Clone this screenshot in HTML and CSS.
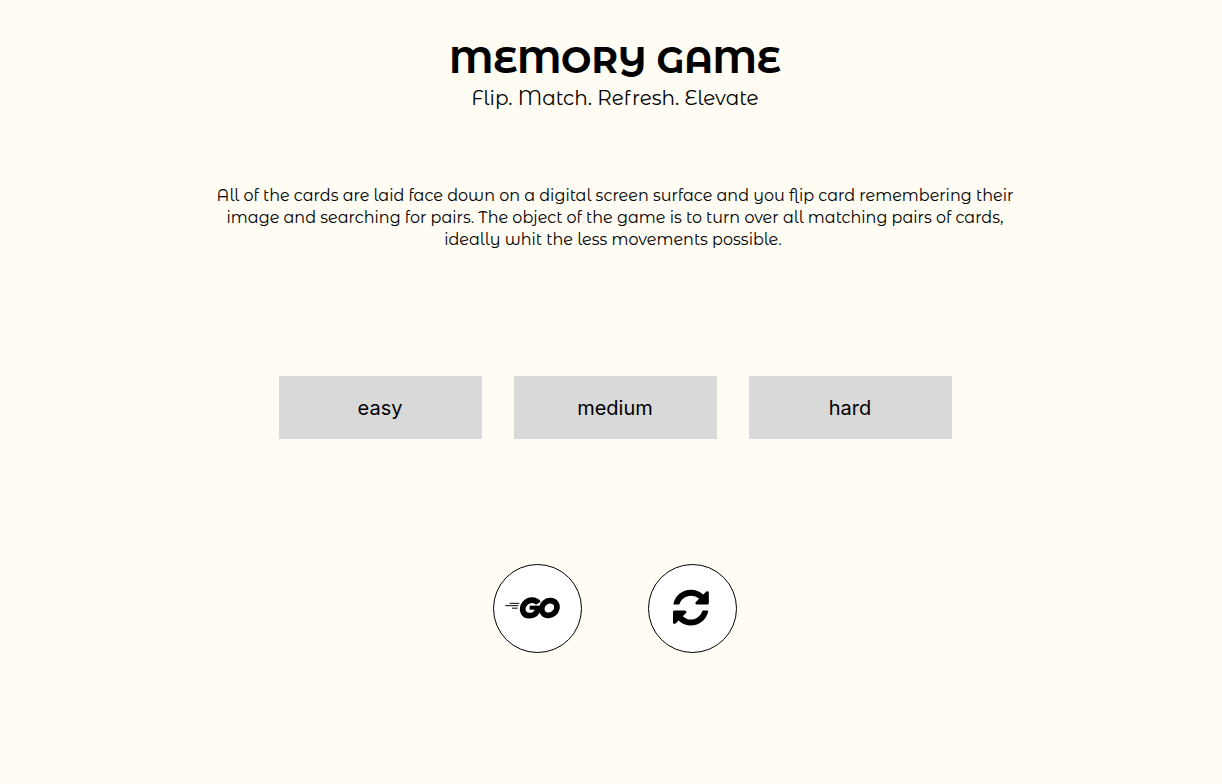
FILE: index.html
```html
<!DOCTYPE html>
<html lang="en">
<head>
<meta charset="utf-8">
<meta name="viewport" content="width=device-width, initial-scale=1">
<title>Memory Game</title>
<link rel="stylesheet" href="styles.css">
</head>
<body>
<main class="page">
  <header class="header">
    <h1 class="title">MEMORY GAME</h1>
    <p class="tagline">Flip. Match. Refresh. Elevate</p>
  </header>
  <p class="intro">All of the cards are laid face down on a digital screen surface and you flip card remembering their<br>image and searching for pairs. The object of the game is to turn over all matching pairs of cards,<br>ideally whit the less movements possible.&nbsp;</p>
  <div class="levels">
    <button class="level" type="button">easy</button>
    <button class="level" type="button">medium</button>
    <button class="level" type="button">hard</button>
  </div>
  <div class="actions">
    <button class="action" type="button" aria-label="Go">
      <svg class="art" viewBox="26 29 261 261" aria-hidden="true">
        <g fill="none" stroke="#000">
          <path d="M60 151H99" stroke-width="3"/>
          <path d="M73 144H102M80 158.500H97" stroke-width="3"/>
          <path d="M159 144C151 131 129 131 118 145C106 161 113 181 132 181C147 181 156 173 158 158" stroke-width="17"/>
          <path d="M133 157H164" stroke-width="12"/>
          <ellipse cx="192" cy="158" rx="24" ry="21" stroke-width="17" transform="rotate(-38 192 158)"/>
        </g>
      </svg>
    </button>
    <button class="action" type="button" aria-label="Refresh">
      <svg class="art" viewBox="26 29 261 261" aria-hidden="true">
        <path transform="translate(98 103) scale(.07)" d="M1511 928q0 5-1 7-64 268-268 434.500t-478 166.500q-146 0-282.500-55t-243.500-157l-129 129q-19 19-45 19t-45-19-19-45v-448q0-26 19-45t45-19h448q26 0 45 19t19 45-19 45l-137 137q71 66 161 102t187 36q134 0 250-65t186-179q11-17 53-117 8-23 30-23h192q13 0 22.500 9.500t9.500 22.500zm25-800v448q0 26-19 45t-45 19h-448q-26 0-45-19t-19-45 19-45l138-138q-148-137-349-137-134 0-250 65t-186 179q-11 17-53 117-8 23-30 23h-199q-13 0-22.500-9.500t-9.500-22.500v-7q65-268 270-434.500t480-166.500q146 0 284 55.500t245 156.500l130-129q19-19 45-19t45 19 19 45z"/>
      </svg>
    </button>
  </div>
</main>
</body>
</html>
```
FILE: styles.css
```css
* { box-sizing: border-box; }

body {
  margin: 0;
  background: #fffcf4;
  color: #000;
  font-family: "Montserrat Alternates", Inter, sans-serif;
}

.page {
  display: flex;
  flex-direction: column;
  align-items: center;
  padding: 36px 0 48px 8px;
  text-align: center;
}

.title {
  margin: 0;
  font-size: 36px;
  font-weight: 700;
  line-height: 48px;
}

.tagline {
  margin: 0;
  font-size: 20px;
  line-height: 28px;
}

.intro {
  margin: 73px 0 0;
  font-size: 16px;
  line-height: 22px;
}

.levels {
  display: flex;
  flex-wrap: wrap;
  justify-content: center;
  gap: 32px;
  margin-top: 125px;
}

.level {
  width: 203px;
  height: 63px;
  border: 0;
  padding: 0;
  background: #d9d9d9;
  color: #000;
  font: 20px/24px Inter, sans-serif;
}

.actions {
  display: flex;
  gap: 66px;
  margin-top: 125px;
}

.action {
  width: 89px;
  height: 89px;
  padding: 0;
  border: 1px solid #000;
  border-radius: 50%;
  background: #fff;
}

.art {
  display: block;
  width: 100%;
}
```
